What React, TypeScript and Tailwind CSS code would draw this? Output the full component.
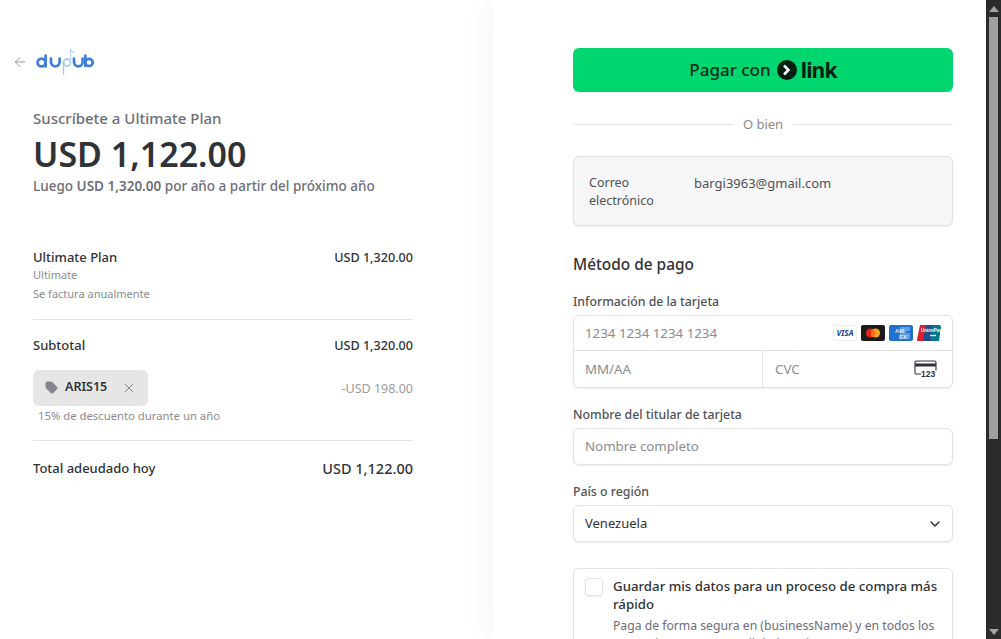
import { ArrowLeft, ChevronDown, Tag, X } from 'lucide-react';

function Logo() {
  return (
    <svg width="58" height="28" viewBox="0 0 58 28" fill="none" className="ml-[8px]">
      <g stroke="#3f7fdc" strokeWidth="2.700" strokeLinecap="round">
        <circle cx="5.500" cy="14.500" r="3.900" />
        <path d="M9.600 7.500v11" />
        <path d="M15 10.500v3.500a4.300 4.300 0 0 0 8.600 0v-3.500" />
        <circle cx="31" cy="14.500" r="3.500" stroke="#a9cbf0" strokeWidth="1.800" />
        <path d="M27.500 14v12" stroke="#a9cbf0" strokeWidth="1.400" />
        <path d="M34.500 14V1.500l3 3" stroke="#bcd6f3" strokeWidth="1.300" />
        <path d="M38 10.500v3.500a4.300 4.300 0 0 0 8.600 0v-3.500" />
        <path d="M49.300 7.500v10.500" />
        <circle cx="53" cy="14.500" r="3.700" />
      </g>
    </svg>
  );
}

function LineItem({ label, value, bold }: { label: string; value: string; bold?: boolean }) {
  return (
    <div className="flex items-center justify-between">
      <span className="text-[13px] font-medium text-[#303236]">{label}</span>
      <span className={bold ? 'text-[14.500px] font-medium text-[#303236]' : 'mt-[1px] text-[12.600px] font-medium text-[#303236]'}>
        {value}
      </span>
    </div>
  );
}

function CardBrands() {
  return (
    <div className="flex items-center gap-[4px]">
      <div className="flex h-[16px] w-[24px] items-center justify-center rounded-[2px] border border-[#efefef] bg-white text-[8px] font-bold italic text-[#1a3f8f]">
        VISA
      </div>
      <svg width="24" height="16" viewBox="0 0 24 16">
        <rect width="24" height="16" rx="2" fill="#1d1a1a" />
        <circle cx="9.500" cy="8" r="4.600" fill="#e2231a" />
        <circle cx="14.500" cy="8" r="4.600" fill="#f6a11c" />
        <path d="M12 4.100a4.600 4.600 0 0 1 0 7.800a4.600 4.600 0 0 1 0-7.800z" fill="#f26a1f" />
      </svg>
      <svg width="24" height="16" viewBox="0 0 24 16">
        <rect width="24" height="16" rx="2" fill="#1f72cd" />
        <path d="M11 2h10v4h-4v2h4v6H11z" fill="#5d9fe0" />
        <text x="6" y="8" fontSize="6" fontWeight="700" fontFamily="Liberation Sans, sans-serif" fill="#dcebf9">
          AM
        </text>
        <text x="10" y="13.500" fontSize="6" fontWeight="700" fontFamily="Liberation Sans, sans-serif" fill="#dcebf9">
          EX
        </text>
      </svg>
      <svg width="24" height="16" viewBox="0 0 24 16">
        <path d="M3 0h8L8 16H1a1 1 0 0 1-1-1.400z" fill="#d8232f" />
        <path d="M9 0h8l-3 16H6z" fill="#1d4f91" />
        <path d="M15 0h7a2 2 0 0 1 2 2l-2 14h-8z" fill="#01798a" />
        <text x="4" y="7" fontSize="4.500" fontWeight="700" fontFamily="Liberation Sans, sans-serif" fill="#fff">
          UnionPay
        </text>
        <path d="M13 10.500h6" stroke="#e4f0ee" strokeWidth="1.400" />
      </svg>
    </div>
  );
}

function CvcIcon() {
  return (
    <svg width="24" height="18" viewBox="0 0 24 18" fill="none">
      <path d="M7 14H2.500A1.500 1.500 0 0 1 1 12.500v-10A1.500 1.500 0 0 1 2.500 1h18A1.500 1.500 0 0 1 22 2.500v8" stroke="#30313d" strokeWidth="1.100" />
      <rect x="1" y="3.500" width="21" height="3" fill="#30313d" />
      <text x="7" y="17" fontSize="8.500" fontWeight="700" fontFamily="Liberation Sans, sans-serif" fill="#30313d">
        123
      </text>
    </svg>
  );
}

function Scrollbar() {
  return (
    <div className="flex h-full w-[15px] shrink-0 flex-col items-center bg-[#2b2b2b]">
      <div className="mt-[6px] h-0 w-0 border-x-[5px] border-b-[6px] border-x-transparent border-b-[#a3a3a3]" />
      <div className="mt-[5px] h-[422px] w-[9px] bg-[#9f9f9f]" />
      <div className="flex-1" />
      <div className="mb-[4px] h-0 w-0 border-x-[5px] border-t-[6px] border-x-transparent border-t-[#a3a3a3]" />
    </div>
  );
}

const inputText = 'text-[13.300px] text-[#8a8b90]';
const fieldLabel = 'mb-[4px] text-[12.300px] font-medium leading-[18px] text-[#4f5157]';
const fieldShadow = 'border border-[#e3e3e3] shadow-[0_1px_2px_rgba(0,0,0,0.08)]';

export default function App() {
  return (
    <div className="flex h-[639px] w-[1001px] overflow-hidden bg-white font-['Noto_Sans',sans-serif]">
      <main className="w-[493px] shrink-0 pl-[33px] pr-[80px] pt-[48px]">
        <div className="-ml-[21px] flex h-[28px] items-center">
          <ArrowLeft size={16} strokeWidth={1.500} className="text-[#9a9a9a]" />
          <Logo />
        </div>

        <p className="mt-[32px] text-[15px] font-medium leading-[20px] text-[#6d6e78]">Suscríbete a Ultimate Plan</p>
        <h1 className="mt-[5px] text-[34px] font-semibold leading-[42px] text-[#303236]">USD 1,122.00</h1>
        <p className="mt-[2px] text-[13.500px] font-medium leading-[18px] text-[#6d6e78]">
          Luego <span className="font-semibold">USD 1,320.00</span> por año a partir del próximo año
        </p>

        <section className="mt-[53px]">
          <LineItem label="Ultimate Plan" value="USD 1,320.00" />
          <p className="-mt-[3px] text-[11px] leading-[19px] text-[#8a8b90]">Ultimate</p>
          <p className="text-[11px] leading-[19px] text-[#8a8b90]">Se factura anualmente</p>
          <div className="mt-[16px] border-t border-[#e3e3e3]" />

          <div className="mt-[16px]">
            <LineItem label="Subtotal" value="USD 1,320.00" />
          </div>
          <div className="mt-[14px] flex items-center justify-between">
            <div className="flex h-[36px] w-[115px] items-center rounded-[6px] bg-[#e6e6e6] pl-[12px]">
              <Tag size={13} className="fill-[#85868c] text-[#85868c]" />
              <span className="ml-[7px] text-[12.500px] font-semibold text-[#303236]">ARIS15</span>
              <X size={16} strokeWidth={1.500} className="ml-[14px] text-[#85868c]" />
            </div>
            <span className="mt-[4px] text-[12.500px] text-[#9a9ba0]">-USD 198.00</span>
          </div>
          <p className="ml-[5px] mt-[1px] text-[11.300px] leading-[18px] text-[#8a8b90]">15% de descuento durante un año</p>
          <div className="mt-[15px] border-t border-[#e3e3e3]" />

          <div className="mt-[17px]">
            <LineItem label="Total adeudado hoy" value="USD 1,122.00" bold />
          </div>
        </section>
      </main>

      <div className="flex-1 pl-[80px] pr-[33px] pt-[48px] shadow-[-8px_0_24px_rgba(0,0,0,0.035)]">
        <button className="flex h-[44px] w-full items-center justify-center rounded-[6px] bg-[#00d66f] text-[#0a2c1a]">
          <span className="text-[17px] font-medium">Pagar con</span>
          <span className="ml-[6px] flex h-[20px] w-[20px] items-center justify-center rounded-full bg-[#011e0f]">
            <svg width="11" height="12" viewBox="0 0 11 12" fill="none">
              <path d="M3 1.500l4.500 4.500-4.500 4.500" stroke="#fff" strokeWidth="2.600" />
            </svg>
          </span>
          <span className="ml-[4px] text-[21px] font-bold leading-none tracking-[-0.8px] text-[#011e0f]">link</span>
        </button>

        <div className="mt-[23px] flex items-center gap-[10px]">
          <div className="h-px flex-1 bg-[#e3e3e3]" />
          <span className="text-[13px] leading-[18px] text-[#8a8b90]">O bien</span>
          <div className="h-px flex-1 bg-[#e3e3e3]" />
        </div>

        <div className={`mt-[23px] flex h-[70px] rounded-[6px] bg-[#f6f6f6] pl-[15px] pt-[17px] ${fieldShadow}`}>
          <span className="w-[105px] text-[12.500px] leading-[18px] text-[#4f5157]">Correo electrónico</span>
          <span className="text-[13px] leading-[18px] text-[#4f5157]">bargi3963@gmail.com</span>
        </div>

        <h2 className="mt-[28px] text-[15.400px] font-medium leading-[22px] text-[#303236]">Método de pago</h2>

        <p className={`mt-[17px] ${fieldLabel}`}>Información de la tarjeta</p>
        <div className={`rounded-[6px] bg-white ${fieldShadow}`}>
          <div className="flex h-[35px] items-center justify-between border-b border-[#e3e3e3] pl-[11px] pr-[11px]">
            <span className={`pt-[1px] ${inputText}`}>1234 1234 1234 1234</span>
            <CardBrands />
          </div>
          <div className="flex h-[36px]">
            <div className="flex w-[189px] items-center border-r border-[#e3e3e3] pl-[11px]">
              <span className={`pt-[1px] ${inputText}`}>MM/AA</span>
            </div>
            <div className="flex flex-1 items-center justify-between pl-[12px] pr-[14px]">
              <span className={`pt-[1px] ${inputText}`}>CVC</span>
              <CvcIcon />
            </div>
          </div>
        </div>

        <p className={`mt-[18px] ${fieldLabel}`}>Nombre del titular de tarjeta</p>
        <div className={`flex h-[37px] items-center rounded-[6px] bg-white pl-[11px] ${fieldShadow}`}>
          <span className={inputText}>Nombre completo</span>
        </div>

        <p className={`mt-[18px] ${fieldLabel}`}>País o región</p>
        <div className={`flex h-[37px] items-center justify-between rounded-[6px] bg-white pl-[11px] pr-[9px] ${fieldShadow}`}>
          <span className="pt-[1px] text-[13px] text-[#303236]">Venezuela</span>
          <ChevronDown size={16} strokeWidth={2.200} className="text-[#303236]" />
        </div>

        <div className={`mt-[26px] flex rounded-[6px] bg-white pl-[11px] pr-[12px] pt-[8px] pb-[12px] ${fieldShadow}`}>
          <div className={`mt-[1px] h-[18px] w-[18px] shrink-0 rounded-[4px] bg-white ${fieldShadow}`} />
          <div className="ml-[10px]">
            <p className="text-[13.250px] font-medium leading-[18px] text-[#303236]">
              Guardar mis datos para un proceso de compra más rápido
            </p>
            <p className="mt-[4px] text-[12.200px] leading-[18px] text-[#6d6e78]">
              Paga de forma segura en (businessName) y en todos los comercios que aceptan link de Stripe.
            </p>
          </div>
        </div>
      </div>

      <Scrollbar />
    </div>
  );
}
